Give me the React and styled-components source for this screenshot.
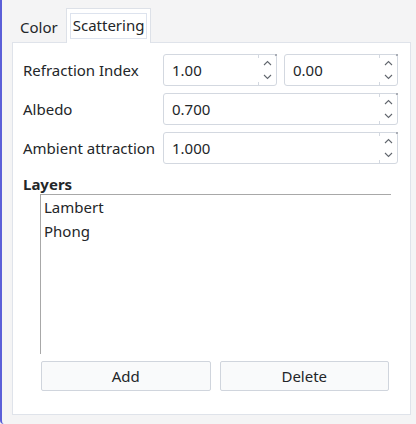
import React from 'react'
import styled, { createGlobalStyle } from 'styled-components'

const Global = createGlobalStyle`
	html, body {
		margin: 0;
		padding: 0;
		background: #f4f4f5;
	}
	body {
		font-family: "Noto Sans", "Open Sans", sans-serif;
		font-size: 15px;
		color: #232629;
	}
`

const Window = styled.div`
	width: 416px;
	height: 424px;
	box-sizing: border-box;
	border-left: 2px solid #5b5fd8;
	border-bottom-left-radius: 4px;
	padding: 8px 5px 0 10px;
	background: #f4f4f5;
`

const TabBar = styled.div`
	display: flex;
	align-items: flex-end;
	height: 34px;
`

const Tab = styled.div`
	box-sizing: border-box;
	height: ${p => (p.$active ? '35px' : '32px')};
	padding: 0 ${p => (p.$active ? '3px' : '4px')};
	display: flex;
	align-items: center;
	background: ${p => (p.$active ? '#ffffff' : 'transparent')};
	border: 1px solid ${p => (p.$active ? '#dde1e8' : 'transparent')};
	border-bottom: none;
	margin-bottom: -1px;
	position: relative;
	z-index: 1;
`

const TabText = styled.span`
	padding: 2px 2px 3px;
	border: ${p => (p.$focus ? '1px solid #dde3ee' : '1px solid transparent')};
	line-height: 19px;
`

const Panel = styled.div`
	box-sizing: border-box;
	width: 399px;
	height: 373px;
	background: #ffffff;
	border: 1px solid #dfe3ea;
	padding: 11px 12px 0 10px;
	display: flex;
	flex-direction: column;
`

const Form = styled.div`
	display: grid;
	grid-template-columns: 140px 1fr;
	row-gap: 7px;
	align-items: center;
`

const Label = styled.div`
	line-height: 20px;
`

const Pair = styled.div`
	display: flex;
	gap: 7px;
`

const SpinBox = styled.div`
	flex: 1;
	box-sizing: border-box;
	height: 32px;
	border: 1px solid #d3d8e0;
	border-radius: 3px;
	display: flex;
	align-items: center;
	position: relative;
	background: #fff;
`

const SpinValue = styled.span`
	flex: 1;
	padding-left: 8px;
	line-height: 20px;
`

const Arrows = styled.div`
	width: 18px;
	height: 100%;
	display: flex;
	flex-direction: column;
	justify-content: space-between;
	align-items: center;
	padding: 5px 0;
	box-sizing: border-box;
	position: relative;
	&::before, &::after {
		content: '';
		position: absolute;
		left: 0;
		width: 1px;
		height: 3px;
		background: #d3d8e0;
	}
	&::before { top: 0; }
	&::after { bottom: 0; }
`

const Corner = styled.div`
	position: absolute;
	right: -1px;
	top: -1px;
	width: 2px;
	height: 2px;
	background: #a9adb5;
`

const Section = styled.div`
	margin-top: 10px;
	font-weight: bold;
	line-height: 20px;
`

const ListBox = styled.div`
	box-sizing: border-box;
	margin: 0 0 0 17px;
	width: 351px;
	height: 160px;
	border-top: 1px solid #a8a8a8;
	border-left: 1px solid #a8a8a8;
	padding: 0 0 0 3px;
`

const ListItem = styled.div`
	line-height: 24px;
`

const Buttons = styled.div`
	display: flex;
	gap: 9px;
	margin: 7px 0 0 18px;
	width: 348px;
`

const Button = styled.div`
	flex: 1;
	box-sizing: border-box;
	height: 30px;
	display: flex;
	align-items: center;
	justify-content: center;
	background: #f9fafb;
	border: 1px solid #d0d5dd;
	border-radius: 2px;
`

function Chevron({ up }) {
	return (
		<svg width="9" height="6" viewBox="0 0 9 6">
			<polyline
				points={up ? '1,5 4.5,1.5 8,5' : '1,1 4.5,4.5 8,1'}
				fill="none"
				stroke="#62676e"
				strokeWidth="1.1"
			/>
		</svg>
	)
}

function Spin({ value }) {
	return (
		<SpinBox>
			<SpinValue>{value}</SpinValue>
			<Arrows>
				<Chevron up />
				<Chevron />
			</Arrows>
			<Corner />
		</SpinBox>
	)
}

export default function App() {
	return (
		<Window>
			<Global />
			<TabBar>
				<Tab><TabText>Color</TabText></Tab>
				<Tab $active><TabText $focus>Scattering</TabText></Tab>
			</TabBar>
			<Panel>
				<Form>
					<Label>Refraction Index</Label>
					<Pair>
						<Spin value="1.00" />
						<Spin value="0.00" />
					</Pair>
					<Label>Albedo</Label>
					<Spin value="0.700" />
					<Label>Ambient attraction</Label>
					<Spin value="1.000" />
				</Form>
				<Section>Layers</Section>
				<ListBox>
					<ListItem>Lambert</ListItem>
					<ListItem>Phong</ListItem>
				</ListBox>
				<Buttons>
					<Button>Add</Button>
					<Button>Delete</Button>
				</Buttons>
			</Panel>
		</Window>
	)
}
